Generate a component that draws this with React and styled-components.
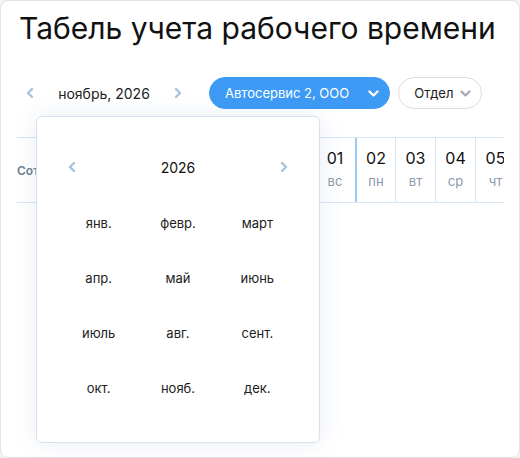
import React from 'react';
import styled, { createGlobalStyle } from 'styled-components';

const GlobalStyle = createGlobalStyle`
    html, body {
        margin: 0;
        padding: 0;
        background: #f4f4f4;
        font-family: Inter, "Noto Sans", sans-serif;
        color: #1a1a1a;
    }
`;

const Card = styled.div`
    box-sizing: border-box;
    width: 520px;
    height: 458px;
    background: #fff;
    border: 1px solid #e2e2e2;
    border-radius: 8px;
    padding: 9px 16px 16px 16px;
    position: relative;
    overflow: hidden;
`;

const Title = styled.h1`
    margin: 0 0 0 2px;
    font-size: 30px;
    font-weight: 400;
    line-height: 36px;
    letter-spacing: 0;
    color: #111;
`;

const Toolbar = styled.div`
    display: flex;
    align-items: center;
    margin-top: 31px;
    padding-left: 6px;
    height: 32px;
`;

const NavButton = styled.button`
    border: none;
    background: none;
    padding: 0;
    width: 14px;
    height: 20px;
    display: flex;
    align-items: center;
    justify-content: center;
    cursor: pointer;
`;

const MonthLabel = styled.span`
    font-size: 14px;
    width: 126px;
    text-align: center;
    margin: 0 4px;
    color: #222;
`;

const Pill = styled.button`
    box-sizing: border-box;
    height: 32px;
    border-radius: 16px;
    display: flex;
    align-items: center;
    gap: ${p => p.$gap}px;
    padding: 0 ${p => p.$right}px 0 ${p => p.$left}px;
    font-family: inherit;
    font-size: 13px;
    cursor: pointer;
    background: ${p => (p.$primary ? '#3d9bf5' : '#fff')};
    color: ${p => (p.$primary ? '#fff' : '#222')};
    border: 1px solid ${p => (p.$primary ? '#3d9bf5' : '#dadde2')};
`;

const TableWrap = styled.div`
    margin-top: 28px;
    width: 487px;
    overflow: hidden;
`;

const HeaderRow = styled.div`
    display: flex;
    height: 64px;
    border-top: 1px solid #d8e7f8;
    border-bottom: 1px solid #d8e7f8;
`;

const EmployeeCell = styled.div`
    flex: 0 0 298px;
    display: flex;
    align-items: center;
    font-size: 12px;
    font-weight: 600;
    color: #6f7f94;
`;

const DayCell = styled.div`
    box-sizing: border-box;
    flex: 0 0 40px;
    display: flex;
    flex-direction: column;
    align-items: center;
    padding-top: 10px;
    border-left: ${p => (p.$mark ? '2px solid #9ccaf6' : p.$first ? 'none' : '1px solid #d8e7f8')};
`;

const DayNum = styled.span`
    font-size: 16px;
    color: #111;
    line-height: 20px;
`;

const DayName = styled.span`
    font-size: 13px;
    color: #8b99ab;
    margin-top: 5px;
    line-height: 16px;
`;

const Popup = styled.div`
    position: absolute;
    left: 35px;
    top: 115px;
    box-sizing: border-box;
    width: 284px;
    height: 327px;
    background: #fff;
    border: 1px solid #d9e1ec;
    border-radius: 6px;
    box-shadow: 0 0 22px rgba(60, 110, 180, 0.13);
    padding: 38px 22px 0 22px;
`;

const YearRow = styled.div`
    display: flex;
    align-items: center;
    justify-content: space-between;
    height: 24px;
    padding: 0 6px;
`;

const YearLabel = styled.span`
    font-size: 14px;
    color: #111;
`;

const MonthGrid = styled.div`
    display: grid;
    grid-template-columns: repeat(3, 1fr);
    grid-auto-rows: 55px;
    margin-top: 16px;
`;

const MonthItem = styled.div`
    display: flex;
    align-items: center;
    justify-content: center;
    font-size: 13px;
    color: #222;
`;

const Chevron = ({ dir = 'left', color = '#a8c2e0', size = 10 }) => {
    const points = {
        left: '6,1 2,5 6,9',
        right: '2,1 6,5 2,9',
        down: '1,2.5 5,6.5 9,2.5',
    }[dir];
    const w = dir === 'down' ? 10 : 8;
    return (
        <svg width={dir === 'down' ? size + 2 : size * 0.8} height={size} viewBox={`0 0 ${w} ${dir === 'down' ? 9 : 10}`}>
            <polyline points={points} fill="none" stroke={color} strokeWidth="2.4" strokeLinecap="round" strokeLinejoin="round" />
        </svg>
    );
};

const days = [
    ['01', 'вс'],
    ['02', 'пн'],
    ['03', 'вт'],
    ['04', 'ср'],
    ['05', 'чт'],
];

const months = ['янв.', 'февр.', 'март', 'апр.', 'май', 'июнь', 'июль', 'авг.', 'сент.', 'окт.', 'нояб.', 'дек.'];

export default function App() {
    return (
        <>
            <GlobalStyle />
            <Card>
                <Title>Табель учета рабочего времени</Title>
                <Toolbar>
                    <NavButton><Chevron dir="left" /></NavButton>
                    <MonthLabel>ноябрь, 2026</MonthLabel>
                    <NavButton><Chevron dir="right" /></NavButton>
                    <Pill $primary $left={15} $right={10} $gap={19} style={{ marginLeft: 24 }}>
                        Автосервис 2, ООО
                        <Chevron dir="down" color="#fff" size={9} />
                    </Pill>
                    <Pill $left={15} $right={10} $gap={7} style={{ marginLeft: 8 }}>
                        Отдел
                        <Chevron dir="down" color="#a4abb6" size={9} />
                    </Pill>
                </Toolbar>
                <TableWrap>
                    <HeaderRow>
                        <EmployeeCell>Сотрудник</EmployeeCell>
                        {days.map(([n, d], i) => (
                            <DayCell key={n} $first={i === 0} $mark={i === 1}>
                                <DayNum>{n}</DayNum>
                                <DayName>{d}</DayName>
                            </DayCell>
                        ))}
                    </HeaderRow>
                </TableWrap>
                <Popup>
                    <YearRow>
                        <NavButton><Chevron dir="left" /></NavButton>
                        <YearLabel>2026</YearLabel>
                        <NavButton><Chevron dir="right" /></NavButton>
                    </YearRow>
                    <MonthGrid>
                        {months.map(m => (
                            <MonthItem key={m}>{m}</MonthItem>
                        ))}
                    </MonthGrid>
                </Popup>
            </Card>
        </>
    );
}
